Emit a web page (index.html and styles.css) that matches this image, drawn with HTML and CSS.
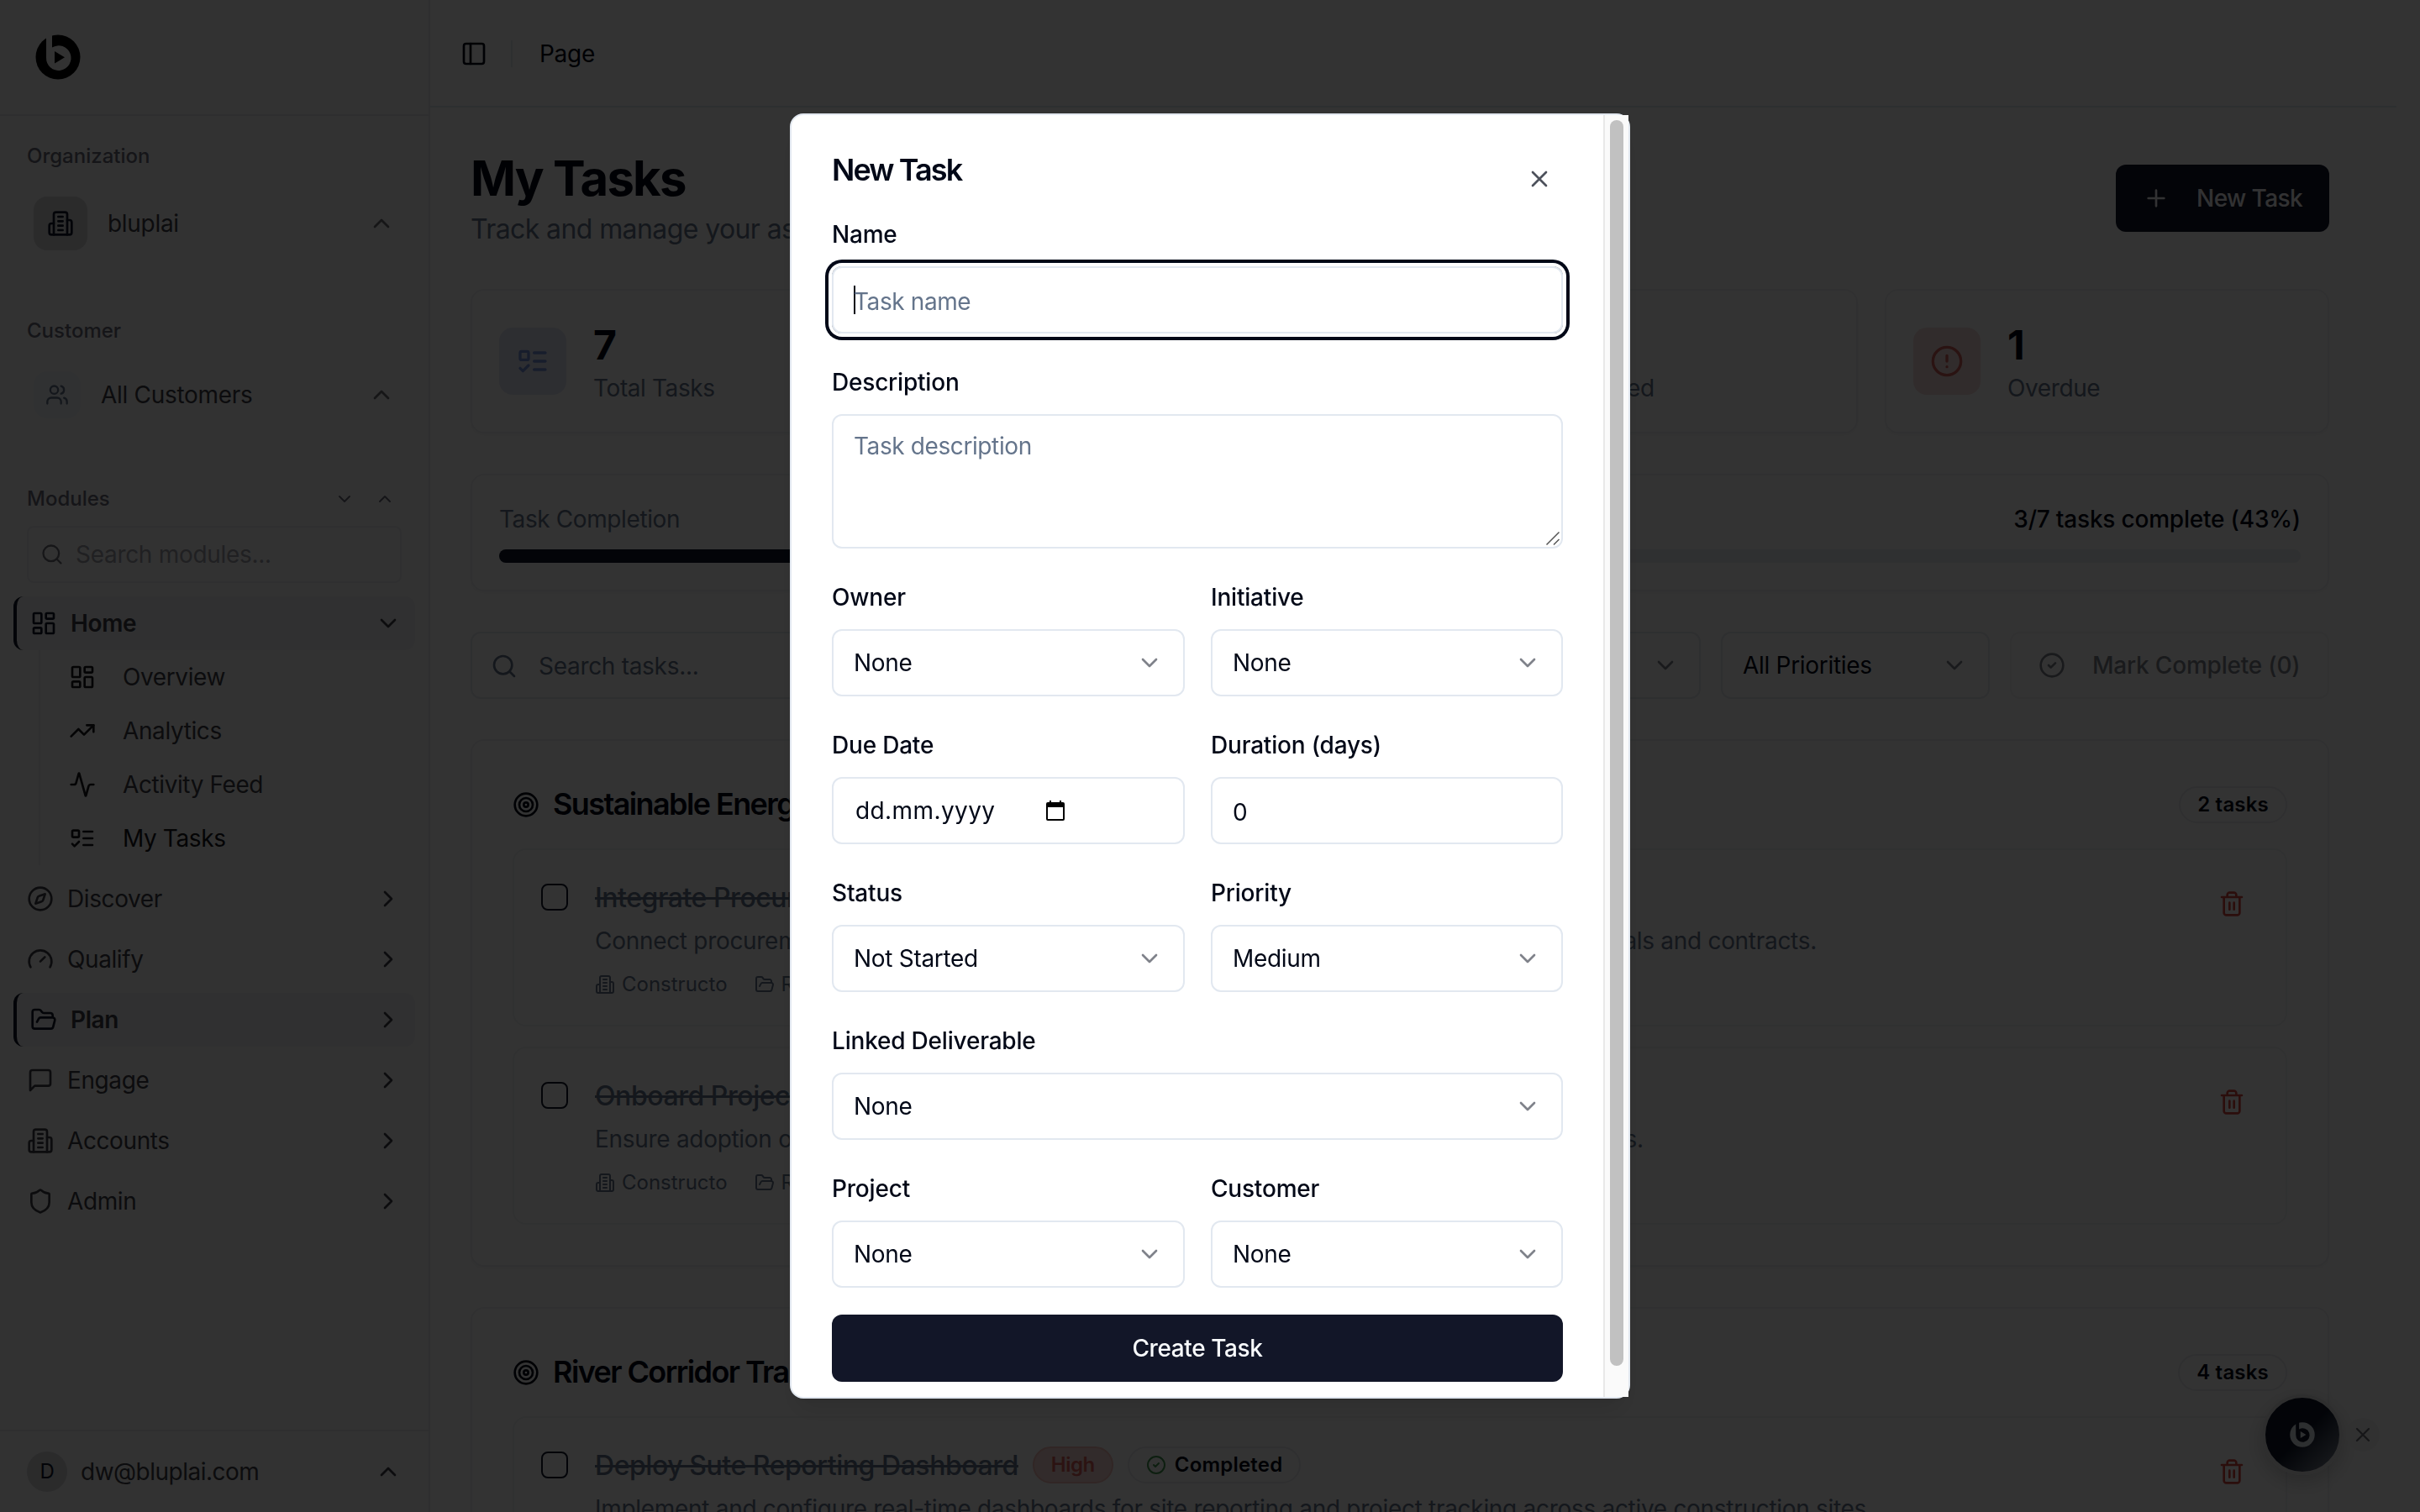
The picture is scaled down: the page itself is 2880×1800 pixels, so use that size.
FILE: index.html
```html
<!DOCTYPE html>
<html lang="en">
<head>
    <meta charset="UTF-8">
    <meta name="viewport" content="width=device-width, initial-scale=1.0">
    <title>My Tasks</title>
    <link rel="stylesheet" href="styles.css">
</head>
<body>
    <!-- Icon set -->
    <svg class="sprite" xmlns="http://www.w3.org/2000/svg">
        <symbol id="panel" viewBox="0 0 24 24"><rect width="18" height="18" x="3" y="3" rx="2"/><path d="M9 3v18"/></symbol>
        <symbol id="building" viewBox="0 0 24 24"><path d="M6 22V4a2 2 0 0 1 2-2h8a2 2 0 0 1 2 2v18Z"/><path d="M6 12H4a2 2 0 0 0-2 2v6a2 2 0 0 0 2 2h2"/><path d="M18 9h2a2 2 0 0 1 2 2v9a2 2 0 0 1-2 2h-2"/><path d="M10 6h4M10 10h4M10 14h4M10 18h4"/></symbol>
        <symbol id="users" viewBox="0 0 24 24"><path d="M16 21v-2a4 4 0 0 0-4-4H6a4 4 0 0 0-4 4v2"/><circle cx="9" cy="7" r="4"/><path d="M22 21v-2a4 4 0 0 0-3-3.87"/><path d="M16 3.13a4 4 0 0 1 0 7.75"/></symbol>
        <symbol id="up" viewBox="0 0 24 24"><path d="m18 15-6-6-6 6"/></symbol>
        <symbol id="down" viewBox="0 0 24 24"><path d="m6 9 6 6 6-6"/></symbol>
        <symbol id="right" viewBox="0 0 24 24"><path d="m9 18 6-6-6-6"/></symbol>
        <symbol id="search" viewBox="0 0 24 24"><circle cx="11" cy="11" r="8"/><path d="m21 21-4.3-4.3"/></symbol>
        <symbol id="dashboard" viewBox="0 0 24 24"><rect width="7" height="9" x="3" y="3" rx="1"/><rect width="7" height="5" x="14" y="3" rx="1"/><rect width="7" height="9" x="14" y="12" rx="1"/><rect width="7" height="5" x="3" y="16" rx="1"/></symbol>
        <symbol id="trending" viewBox="0 0 24 24"><path d="m22 7-8.5 8.5-5-5L2 17"/><path d="M16 7h6v6"/></symbol>
        <symbol id="activity" viewBox="0 0 24 24"><path d="M22 12h-2.48a2 2 0 0 0-1.93 1.46l-2.35 8.36a.25.25 0 0 1-.48 0L9.24 2.18a.25.25 0 0 0-.48 0l-2.35 8.36A2 2 0 0 1 4.49 12H2"/></symbol>
        <symbol id="todo" viewBox="0 0 24 24"><rect x="3" y="5" width="6" height="6" rx="1"/><path d="m3 17 2 2 4-4"/><path d="M13 6h8M13 12h8M13 18h8"/></symbol>
        <symbol id="compass" viewBox="0 0 24 24"><path d="m16.24 7.76-1.804 5.411a2 2 0 0 1-1.265 1.265L7.76 16.24l1.804-5.411a2 2 0 0 1 1.265-1.265z"/><circle cx="12" cy="12" r="10"/></symbol>
        <symbol id="gauge" viewBox="0 0 24 24"><path d="m12 14 4-4"/><path d="M3.34 19a10 10 0 1 1 17.32 0"/></symbol>
        <symbol id="folder" viewBox="0 0 24 24"><path d="m6 14 1.5-2.9A2 2 0 0 1 9.24 10H20a2 2 0 0 1 1.94 2.5l-1.54 6a2 2 0 0 1-1.95 1.5H4a2 2 0 0 1-2-2V5a2 2 0 0 1 2-2h3.9a2 2 0 0 1 1.69.9l.81 1.2a2 2 0 0 0 1.67.9H18a2 2 0 0 1 2 2v2"/></symbol>
        <symbol id="message" viewBox="0 0 24 24"><path d="M21 15a2 2 0 0 1-2 2H7l-4 4V5a2 2 0 0 1 2-2h14a2 2 0 0 1 2 2z"/></symbol>
        <symbol id="shield" viewBox="0 0 24 24"><path d="M20 13c0 5-3.5 7.5-7.66 8.95a1 1 0 0 1-.67-.01C7.5 20.5 4 18 4 13V6a1 1 0 0 1 1-1c2 0 4.5-1.2 6.24-2.72a1.17 1.17 0 0 1 1.52 0C14.51 3.81 17 5 19 5a1 1 0 0 1 1 1z"/></symbol>
        <symbol id="plus" viewBox="0 0 24 24"><path d="M5 12h14M12 5v14"/></symbol>
        <symbol id="alert" viewBox="0 0 24 24"><circle cx="12" cy="12" r="10"/><path d="M12 8v4M12 16h.01"/></symbol>
        <symbol id="check" viewBox="0 0 24 24"><circle cx="12" cy="12" r="10"/><path d="m9 12 2 2 4-4"/></symbol>
        <symbol id="clock" viewBox="0 0 24 24"><circle cx="12" cy="12" r="10"/><path d="M12 6v6l4 2"/></symbol>
        <symbol id="target" viewBox="0 0 24 24"><circle cx="12" cy="12" r="10"/><circle cx="12" cy="12" r="6"/><circle cx="12" cy="12" r="2"/></symbol>
        <symbol id="trash" viewBox="0 0 24 24"><path d="M3 6h18M19 6v14c0 1-1 2-2 2H7c-1 0-2-1-2-2V6M8 6V4c0-1 1-2 2-2h4c1 0 2 1 2 2v2M10 11v6M14 11v6"/></symbol>
        <symbol id="x" viewBox="0 0 24 24"><path d="M18 6 6 18M6 6l12 12"/></symbol>
    </svg>

    <div class="app">
        <!-- Sidebar -->
        <aside class="sidebar">
            <div class="sidebar-header">
                <svg class="logo" viewBox="0 0 54 54">
                    <circle class="logo-disc" cx="27" cy="27" r="26.5"/>
                    <path class="logo-mark" d="M13 0h7v15.5a14.8 14.8 0 1 1-7 12z"/>
                    <path class="logo-disc" d="M23 20v14.4l12-7.2z"/>
                </svg>
            </div>
            <div class="section-label org-label">Organization</div>
            <div class="switcher">
                <span class="org-icon"><svg class="icon"><use href="#building"/></svg></span>
                <span class="org-name">bluplai</span>
                <svg class="icon chevron"><use href="#up"/></svg>
            </div>
            <div class="section-label customer-label">Customer</div>
            <div class="switcher customer">
                <span class="customer-icon"><svg class="icon icon-28"><use href="#users"/></svg></span>
                <span class="org-name">All Customers</span>
                <svg class="icon chevron"><use href="#up"/></svg>
            </div>
            <div class="section-label modules-label">
                <span>Modules</span>
                <svg class="icon icon-24"><use href="#down"/></svg>
                <svg class="icon icon-24"><use href="#up"/></svg>
            </div>
            <div class="module-search">
                <svg class="icon icon-28"><use href="#search"/></svg>
                <span>Search modules...</span>
            </div>
            <nav class="nav">
                <div class="nav-item active"><svg class="icon"><use href="#dashboard"/></svg><span>Home</span><svg class="icon"><use href="#down"/></svg></div>
                <div class="subnav">
                    <div class="sub-item"><svg class="icon"><use href="#dashboard"/></svg><span>Overview</span></div>
                    <div class="sub-item"><svg class="icon"><use href="#trending"/></svg><span>Analytics</span></div>
                    <div class="sub-item"><svg class="icon"><use href="#activity"/></svg><span>Activity Feed</span></div>
                    <div class="sub-item current"><svg class="icon"><use href="#todo"/></svg><span>My Tasks</span></div>
                </div>
                <div class="nav-item"><svg class="icon"><use href="#compass"/></svg><span>Discover</span><svg class="icon"><use href="#right"/></svg></div>
                <div class="nav-item"><svg class="icon"><use href="#gauge"/></svg><span>Qualify</span><svg class="icon"><use href="#right"/></svg></div>
                <div class="nav-item active"><svg class="icon"><use href="#folder"/></svg><span>Plan</span><svg class="icon"><use href="#right"/></svg></div>
                <div class="nav-item"><svg class="icon"><use href="#message"/></svg><span>Engage</span><svg class="icon"><use href="#right"/></svg></div>
                <div class="nav-item"><svg class="icon"><use href="#building"/></svg><span>Accounts</span><svg class="icon"><use href="#right"/></svg></div>
                <div class="nav-item"><svg class="icon"><use href="#shield"/></svg><span>Admin</span><svg class="icon"><use href="#right"/></svg></div>
            </nav>
            <div class="user">
                <span class="avatar">D</span>
                <span class="email">dw@bluplai.com</span>
                <svg class="icon"><use href="#up"/></svg>
            </div>
        </aside>

        <!-- Main content -->
        <main class="main">
            <header class="topbar">
                <svg class="icon"><use href="#panel"/></svg>
                <span class="divider"></span>
                <span class="crumb">Page</span>
            </header>
            <div class="content">
                <div class="page-head">
                    <div>
                        <h1>My Tasks</h1>
                        <p class="subtitle">Track and manage your assigned tasks</p>
                    </div>
                    <button class="btn new-task"><svg class="icon"><use href="#plus"/></svg>New Task</button>
                </div>

                <div class="stats">
                    <div class="card stat">
                        <span class="stat-icon blue"><svg class="icon icon-40"><use href="#todo"/></svg></span>
                        <div><p class="stat-value">7</p><p class="stat-label">Total Tasks</p></div>
                    </div>
                    <div class="card stat">
                        <span class="stat-icon blue"><svg class="icon icon-40"><use href="#clock"/></svg></span>
                        <div><p class="stat-value">2</p><p class="stat-label">In Progress</p></div>
                    </div>
                    <div class="card stat">
                        <span class="stat-icon blue"><svg class="icon icon-40"><use href="#check"/></svg></span>
                        <div><p class="stat-value">3</p><p class="stat-label">Completed</p></div>
                    </div>
                    <div class="card stat">
                        <span class="stat-icon red"><svg class="icon icon-40"><use href="#alert"/></svg></span>
                        <div><p class="stat-value">1</p><p class="stat-label">Overdue</p></div>
                    </div>
                </div>

                <div class="card completion">
                    <div class="completion-row"><span class="muted">Task Completion</span><span class="completion-count">3/7 tasks complete (43%)</span></div>
                    <div class="bar"><div class="bar-fill" style="width: 43%"></div></div>
                </div>

                <div class="filters">
                    <div class="filter filter-search"><svg class="icon"><use href="#search"/></svg><span>Search tasks...</span></div>
                    <div class="filter filter-select"><span>All Statuses</span><svg class="icon"><use href="#down"/></svg></div>
                    <div class="filter filter-select"><span>All Priorities</span><svg class="icon"><use href="#down"/></svg></div>
                    <div class="filter mark"><svg class="icon"><use href="#check"/></svg><span>Mark Complete (0)</span></div>
                </div>

                <section class="card group">
                    <div class="group-head">
                        <svg class="icon"><use href="#target"/></svg>
                        <h2>Sustainable Energy Program</h2>
                        <span class="badge">2 tasks</span>
                    </div>
                    <div class="task">
                        <span class="checkbox"></span>
                        <div class="task-body">
                            <div class="task-title"><span class="task-name">Integrate Procurement Platform</span></div>
                            <p class="task-desc">Connect procurement systems with the supplier platforms and automate the syncing of approvals and contracts.</p>
                            <div class="task-meta"><svg class="icon icon-24"><use href="#building"/></svg><span>Constructo</span><svg class="icon icon-24"><use href="#folder"/></svg><span>Rollout</span></div>
                        </div>
                        <svg class="icon trash"><use href="#trash"/></svg>
                    </div>
                    <div class="task">
                        <span class="checkbox"></span>
                        <div class="task-body">
                            <div class="task-title"><span class="task-name">Onboard Project Teams</span></div>
                            <p class="task-desc">Ensure adoption of the platform by training all of the project planners and on-site delivery teams.</p>
                            <div class="task-meta"><svg class="icon icon-24"><use href="#building"/></svg><span>Constructo</span><svg class="icon icon-24"><use href="#folder"/></svg><span>Rollout</span></div>
                        </div>
                        <svg class="icon trash"><use href="#trash"/></svg>
                    </div>
                </section>

                <section class="card group">
                    <div class="group-head">
                        <svg class="icon"><use href="#target"/></svg>
                        <h2>River Corridor Transit</h2>
                        <span class="badge">4 tasks</span>
                    </div>
                    <div class="task">
                        <span class="checkbox"></span>
                        <div class="task-body">
                            <div class="task-title">
                                <span class="task-name">Deploy Sute Reporting Dashboard</span>
                                <span class="badge high">High</span>
                                <span class="badge done"><svg class="icon icon-24"><use href="#check"/></svg>Completed</span>
                            </div>
                            <p class="task-desc">Implement and configure real-time dashboards for site reporting and project tracking across active construction sites.</p>
                        </div>
                        <svg class="icon trash"><use href="#trash"/></svg>
                    </div>
                </section>
            </div>
        </main>
    </div>

    <!-- Assistant launcher -->
    <div class="launcher">
        <div class="launcher-btn">
            <svg class="launcher-logo" viewBox="0 0 54 54">
                <circle class="logo-disc" cx="27" cy="27" r="26.5"/>
                <path class="logo-mark" d="M13 0h7v15.5a14.8 14.8 0 1 1-7 12z"/>
                <path class="logo-disc" d="M23 20v14.4l12-7.2z"/>
            </svg>
        </div>
        <div class="launcher-close"><svg class="icon icon-28"><use href="#x"/></svg></div>
    </div>

    <!-- New task dialog -->
    <div class="overlay">
        <div class="modal">
            <form class="modal-body">
                <div class="modal-head">
                    <h2>New Task</h2>
                    <svg class="icon close"><use href="#x"/></svg>
                </div>
                <div class="field wide">
                    <label>Name</label>
                    <div class="control focused placeholder"><span class="caret"></span>Task name</div>
                </div>
                <div class="field wide">
                    <label>Description</label>
                    <div class="control textarea placeholder">Task description
                        <svg class="grip" viewBox="0 0 18 18"><path d="M1.5 16.5l15-15M10 16.5l6.5-6.5"/></svg>
                    </div>
                </div>
                <div class="field">
                    <label>Owner</label>
                    <div class="control">None<svg class="icon"><use href="#down"/></svg></div>
                </div>
                <div class="field">
                    <label>Initiative</label>
                    <div class="control">None<svg class="icon"><use href="#down"/></svg></div>
                </div>
                <div class="field">
                    <label>Due Date</label>
                    <div class="control">
                        <span class="date">dd.mm.yyyy</span>
                        <svg class="calendar" viewBox="0 0 22 24"><path fill-rule="evenodd" d="M2 2h2V0h2v2h10V0h2v2h2a2 2 0 0 1 2 2v18a2 2 0 0 1-2 2H2a2 2 0 0 1-2-2V4a2 2 0 0 1 2-2zM2 8v14h18V8z"/></svg>
                    </div>
                </div>
                <div class="field">
                    <label>Duration (days)</label>
                    <div class="control number">0</div>
                </div>
                <div class="field">
                    <label>Status</label>
                    <div class="control">Not Started<svg class="icon"><use href="#down"/></svg></div>
                </div>
                <div class="field">
                    <label>Priority</label>
                    <div class="control">Medium<svg class="icon"><use href="#down"/></svg></div>
                </div>
                <div class="field wide">
                    <label>Linked Deliverable</label>
                    <div class="control">None<svg class="icon"><use href="#down"/></svg></div>
                </div>
                <div class="field">
                    <label>Project</label>
                    <div class="control">None<svg class="icon"><use href="#down"/></svg></div>
                </div>
                <div class="field">
                    <label>Customer</label>
                    <div class="control">None<svg class="icon"><use href="#down"/></svg></div>
                </div>
                <button type="button" class="btn create">Create Task</button>
            </form>
            <div class="scrollbar"><div class="thumb"></div></div>
        </div>
    </div>
</body>
</html>
```
FILE: styles.css
```css
* {
    box-sizing: border-box;
    margin: 0;
    padding: 0;
}
body {
    font-family: Inter, 'Liberation Sans', sans-serif;
    font-size: 28px;
    line-height: 40px;
    letter-spacing: -0.3px;
    color: #020817;
    background: #fff;
    height: 100vh;
    overflow: hidden;
}
.sprite {
    display: none;
}
.icon {
    width: 32px;
    height: 32px;
    flex: none;
    fill: none;
    stroke: currentColor;
    stroke-width: 2;
    stroke-linecap: round;
    stroke-linejoin: round;
}
.icon-24 {
    width: 24px;
    height: 24px;
}
.icon-28 {
    width: 28px;
    height: 28px;
}
.icon-40 {
    width: 40px;
    height: 40px;
}
.app {
    display: flex;
    height: 100vh;
    overflow: hidden;
}

/* Sidebar */
.sidebar {
    width: 512px;
    flex: none;
    display: flex;
    flex-direction: column;
    background: #fafafa;
    border-right: 2px solid #e5e7eb;
    color: #3f3f46;
}
.sidebar-header {
    height: 138px;
    padding: 41px 42px;
    border-bottom: 2px solid #e5e7eb;
}
.logo {
    display: block;
    width: 54px;
    height: 54px;
}
.logo-disc {
    fill: #000;
}
.logo-mark {
    fill: #fafafa;
}
.section-label {
    height: 32px;
    line-height: 32px;
    padding-left: 32px;
    font-size: 24px;
    font-weight: 500;
    letter-spacing: 0;
    color: #6b6b7b;
}
.org-label {
    margin-top: 32px;
}
.switcher {
    display: flex;
    align-items: center;
    height: 96px;
    margin-top: 16px;
    padding: 0 40px;
}
.switcher .org-name {
    flex: 1;
}
.chevron {
    opacity: 0.75;
}
.org-icon {
    display: flex;
    align-items: center;
    justify-content: center;
    width: 64px;
    height: 64px;
    margin-right: 24px;
    border-radius: 16px;
    background: #d4d4d8;
    color: #0f172a;
}
.customer-label {
    margin-top: 64px;
}
.switcher.customer {
    margin-top: 12px;
}
.customer-icon {
    display: flex;
    align-items: center;
    justify-content: center;
    width: 56px;
    height: 56px;
    margin-right: 24px;
    border-radius: 16px;
    background: #f1f5f9;
    color: #64748b;
}
.modules-label {
    display: flex;
    align-items: center;
    gap: 24px;
    margin-top: 60px;
    padding-right: 40px;
}
.modules-label span {
    flex: 1;
}
.module-search {
    display: flex;
    align-items: center;
    gap: 14px;
    height: 68px;
    margin: 16px 32px 0;
    padding-left: 14px;
    border: 2px solid #e9eaee;
    border-radius: 8px;
    color: #a1a1aa;
}
.module-search .icon {
    color: #71717a;
}
.nav {
    flex: 1;
    display: flex;
    flex-direction: column;
    gap: 8px;
    padding: 16px 16px 0;
}
.nav-item {
    display: flex;
    align-items: center;
    gap: 16px;
    height: 64px;
    padding: 0 16px;
    border-radius: 12px;
    letter-spacing: -0.4px;
}
.nav-item span {
    flex: 1;
}
.nav-item.active {
    border-left: 4px solid #0f172a;
    background: #f1f1f2;
    font-weight: 600;
}
.nav-item.active .icon:first-child {
    color: #0f172a;
}
.subnav {
    display: flex;
    flex-direction: column;
    gap: 8px;
    height: 256px;
    margin: -8px 30px 0;
    padding: 4px 0 4px 18px;
    border-left: 2px solid #e9eaee;
}
.sub-item {
    display: flex;
    align-items: center;
    gap: 32px;
    height: 56px;
    padding-left: 16px;
    border-radius: 12px;
    letter-spacing: -0.4px;
}
.sub-item .icon {
    color: #18181b;
}
.sub-item.current {
    background: #f7f7f8;
    color: #18181b;
}
.user {
    display: flex;
    align-items: center;
    gap: 16px;
    height: 98px;
    padding: 0 32px;
    border-top: 2px solid #e5e7eb;
}
.avatar {
    width: 48px;
    height: 48px;
    border-radius: 50%;
    background: #d4d4d8;
    color: #0f172a;
    font-size: 24px;
    line-height: 48px;
    text-align: center;
}
.email {
    flex: 1;
    letter-spacing: -0.5px;
}

/* Page */
.main {
    flex: 1;
    min-width: 0;
}
.topbar {
    display: flex;
    align-items: center;
    height: 128px;
    margin-right: 28px;
    padding: 2px 0 0 36px;
    border-bottom: 2px solid #e2e8f0;
}
.divider {
    width: 2px;
    height: 32px;
    margin: 0 31px 0 28px;
    background: #e2e8f0;
}
.crumb {
    padding-left: 1px;
}
.content {
    padding: 48px 108px 0 48px;
}
.page-head {
    display: flex;
    align-items: center;
    justify-content: space-between;
    height: 120px;
}
h1 {
    padding-top: 2px;
    font-size: 58px;
    line-height: 72px;
    font-weight: 700;
    letter-spacing: -1.8px;
}
.subtitle {
    font-size: 32px;
    line-height: 50px;
    letter-spacing: -0.6px;
    color: #64748b;
}
.btn {
    height: 80px;
    border: none;
    border-radius: 12px;
    background: #121628;
    color: #f8fafc;
    font: 500 28px/40px Inter, 'Liberation Sans', sans-serif;
    letter-spacing: -0.4px;
}
.new-task {
    display: flex;
    align-items: center;
    gap: 32px;
    padding: 0 32px;
    letter-spacing: -0.6px;
}
.card {
    border: 2px solid #f0f1f4;
    border-radius: 16px;
    background: #fff;
    box-shadow: 0 2px 4px rgba(0, 0, 0, 0.04);
}
.stats {
    display: grid;
    grid-template-columns: repeat(4, 1fr);
    gap: 32px;
    margin-top: 48px;
}
.stat {
    display: flex;
    align-items: center;
    gap: 32px;
    height: 172px;
    padding: 0 32px;
}
.stat-icon {
    display: flex;
    align-items: center;
    justify-content: center;
    width: 80px;
    height: 80px;
    border-radius: 16px;
}
.blue {
    background: #e2e6f5;
    color: #7490dc;
}
.red {
    background: #f5dcda;
    color: #d0605a;
}
.stat-value {
    padding-top: 1px;
    font-size: 48px;
    line-height: 63px;
    font-weight: 700;
}
.stat-label,
.muted {
    letter-spacing: -0.4px;
    color: #64748b;
}
.completion {
    margin-top: 48px;
    height: 140px;
    padding: 32px;
}
.completion-row {
    display: flex;
    justify-content: space-between;
}
.completion-count {
    font-weight: 500;
    letter-spacing: -0.2px;
}
.bar {
    height: 16px;
    margin-top: 16px;
    border-radius: 8px;
    background: #eceff5;
    overflow: hidden;
}
.bar-fill {
    height: 16px;
    background: #0f172a;
}
.filters {
    display: flex;
    gap: 24px;
    margin-top: 48px;
}
.filter {
    display: flex;
    align-items: center;
    height: 80px;
    padding: 0 24px;
    border: 2px solid #e6e8ed;
    border-radius: 12px;
}
.filter-search {
    flex: 1;
    gap: 25px;
    padding: 2px 22px 0;
    color: #64748b;
}
.filter-select {
    width: 320px;
    justify-content: space-between;
}
.filter-select .icon {
    opacity: 0.5;
}
.mark {
    width: 380px;
    gap: 32px;
    padding: 0 0 0 32px;
    font-weight: 500;
    white-space: nowrap;
    letter-spacing: -0.2px;
    opacity: 0.5;
}
.group {
    margin-top: 48px;
    padding: 48px;
}
.group-head {
    display: flex;
    align-items: center;
    height: 56px;
}
.group-head h2 {
    flex: 1;
    margin: -2px 0 0 16px;
    font-size: 36px;
    font-weight: 600;
    letter-spacing: -1.6px;
}
.badge {
    display: flex;
    align-items: center;
    gap: 10px;
    height: 44px;
    padding: 0 20px;
    border: 2px solid #e9ebf0;
    border-radius: 22px;
    font-size: 24px;
    font-weight: 600;
    letter-spacing: 0.2px;
}
.task {
    display: flex;
    align-items: flex-start;
    height: 212px;
    margin-top: 24px;
    padding: 32px;
    border: 2px solid #f1f2f5;
    border-radius: 16px;
}
.checkbox {
    width: 32px;
    height: 32px;
    margin: 8px 32px 0 0;
    border: 2px solid #0f172a;
    border-radius: 8px;
}
.task-body {
    flex: 1;
    white-space: nowrap;
}
.task-title {
    display: flex;
    align-items: center;
    gap: 17px;
    height: 48px;
}
.task-name {
    padding-top: 1px;
    font-size: 32px;
    font-weight: 500;
    letter-spacing: -0.45px;
    color: #64748b;
    text-decoration: line-through;
}
.task-desc {
    margin-top: 8px;
    color: #64748b;
}
.task-meta {
    display: flex;
    align-items: center;
    margin-top: 16px;
    font-size: 24px;
    line-height: 32px;
    letter-spacing: 0;
    color: #64748b;
}
.task-meta span {
    margin: 0 32px 0 8px;
}
.high {
    border-color: #f2bcb8;
    background: #f8d8d5;
    color: #dc605a;
    letter-spacing: -0.5px;
}
.done .icon {
    color: #409850;
}
.trash {
    margin: 16px 16px 0 0;
    color: #d8453f;
}

/* Launcher floats over the page */
.launcher {
    position: fixed;
    right: 48px;
    bottom: 44px;
    display: flex;
    align-items: center;
    gap: 4px;
}
.launcher-btn {
    display: flex;
    align-items: center;
    justify-content: center;
    width: 96px;
    height: 96px;
    border: 4px solid #e4e4e7;
    border-radius: 50%;
    background: linear-gradient(135deg, #0f172a 50%, #cbd5e1 120%) border-box;
    box-shadow: 0 8px 24px rgba(0, 0, 0, 0.2);
}
.launcher-logo {
    width: 30px;
    height: 30px;
}
.launcher-logo .logo-disc {
    fill: #e2e8f0;
}
.launcher-logo .logo-mark {
    fill: #0f172a;
}
.launcher-close {
    display: flex;
    align-items: center;
    justify-content: center;
    width: 40px;
    height: 40px;
    border-radius: 50%;
    background: #f4f4f5;
    color: #71717a;
}

/* Dialog */
.overlay {
    position: fixed;
    inset: 0;
    display: flex;
    align-items: center;
    justify-content: center;
    background: rgba(0, 0, 0, 0.8);
}
.modal {
    display: flex;
    width: 1000px;
    height: 1530px;
    border: 2px solid #e2e8f0;
    border-radius: 16px;
    background: #fff;
    box-shadow: 0 20px 30px -6px rgba(0, 0, 0, 0.1), 0 8px 12px -8px rgba(0, 0, 0, 0.1);
}
.modal-body {
    flex: 1;
    display: grid;
    grid-template-columns: 420px 1fr;
    align-content: start;
    gap: 32px 31px;
    padding: 48px;
}
.modal-head {
    grid-column: span 2;
    display: flex;
    justify-content: space-between;
    height: 36px;
}
.modal-head h2 {
    margin-top: -1px;
    font-size: 36px;
    line-height: 36px;
    font-weight: 600;
    letter-spacing: -1.9px;
}
.close {
    margin: 12px 12px 0 0;
    opacity: 0.7;
}
.field label {
    display: block;
    height: 64px;
    line-height: 52px;
    font-weight: 500;
    letter-spacing: -0.2px;
}
.wide {
    grid-column: span 2;
}
.control {
    display: flex;
    align-items: center;
    height: 80px;
    padding: 0 24px;
    border: 2px solid #e2e8f0;
    border-radius: 12px;
}
.control .icon {
    margin-left: auto;
    opacity: 0.5;
}
.placeholder {
    letter-spacing: -0.4px;
    color: #64748b;
}
.focused {
    padding-top: 3px;
    box-shadow: 0 0 0 4px #fff, 0 0 0 8px #020817;
}
.caret {
    width: 2px;
    height: 34px;
    margin: -3px -2px 0 0;
    background: #020817;
}
.textarea {
    position: relative;
    align-items: flex-start;
    height: 160px;
    padding-top: 16px;
}
.grip {
    position: absolute;
    right: 1px;
    bottom: 1px;
    width: 18px;
    height: 18px;
    fill: none;
    stroke: #555;
    stroke-width: 1.5;
}
.date {
    width: 226px;
    padding-left: 2px;
    letter-spacing: 0.4px;
}
.calendar {
    width: 22px;
    height: 24px;
    margin-left: 3px;
}
.number {
    padding-top: 3px;
}
.create {
    grid-column: span 2;
}
.scrollbar {
    width: 30px;
    padding: 6px 6px 0 6px;
    border-left: 2px solid #e8e8e8;
    background: #fafafa;
}
.thumb {
    width: 16px;
    height: 1483px;
    border-radius: 8px;
    background: #c1c1c1;
}
```
